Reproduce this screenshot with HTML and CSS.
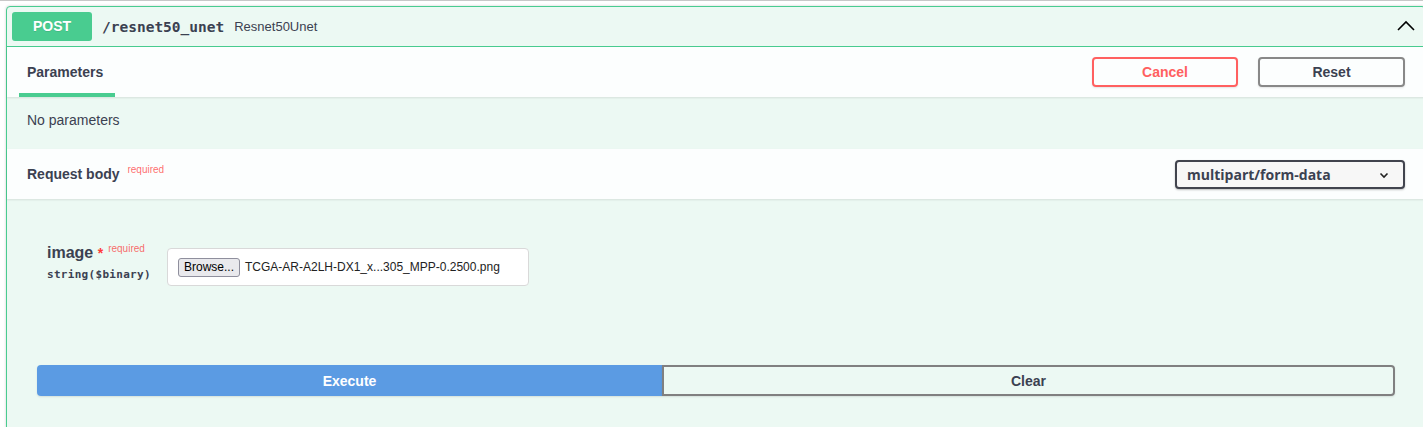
FILE: index.html
```html
<!DOCTYPE html>
<html>
<head>
<meta charset="utf-8">
<link rel="stylesheet" href="styles.css">
</head>
<body>
<div class="top-line"></div>
<div class="opblock">
  <div class="summary">
    <span class="method">POST</span>
    <span class="path">/resnet50_unet</span>
    <span class="desc">Resnet50Unet</span>
    <svg class="chevron" width="20" height="20" viewBox="0 0 20 20"><polyline points="2,14 10,6 18,14" fill="none" stroke="#000" stroke-width="1.6"/></svg>
  </div>
  <div class="section-header">
    <div class="tab"><h4 class="tab-title">Parameters</h4></div>
    <div class="actions">
      <button class="btn cancel">Cancel</button>
      <button class="btn reset">Reset</button>
    </div>
  </div>
  <div class="no-params">No parameters</div>
  <div class="section-header rb-header">
    <h4 class="rb-title">Request body <sup class="req">required</sup></h4>
    <div class="select">
      <span>multipart/form-data</span>
      <svg width="12" height="12" viewBox="0 0 12 12"><polyline points="2.5,4.5 6,8 9.5,4.5" fill="none" stroke="#222" stroke-width="1.6"/></svg>
    </div>
  </div>
  <div class="body">
    <div class="param-row">
      <div class="param-name">
        <div class="pname">image <span class="star">*</span><span class="preq">required</span></div>
        <div class="ptype">string($binary)</div>
      </div>
      <div class="file-input">
        <span class="browse">Browse...</span>
        <span class="fname">TCGA-AR-A2LH-DX1_x...305_MPP-0.2500.png</span>
      </div>
    </div>
    <div class="btn-group">
      <button class="execute">Execute</button>
      <button class="clear">Clear</button>
    </div>
  </div>
</div>
</body>
</html>
```
FILE: styles.css
```css
html, body {
  margin: 0;
  padding: 0;
  background: #fff;
  overflow: hidden;
  width: 1423px;
  height: 427px;
}
body {
  font-family: "Liberation Sans", Arial, sans-serif;
  color: #3b4151;
}
.top-line {
  height: 1px;
  background: #c8c8c8;
}
.opblock {
  margin: 5px 0 0 6px;
  width: 1418px;
  border: 1px solid #49cc90;
  border-radius: 4px;
  background: #ecf9f3;
  box-shadow: 0 0 3px rgba(0,0,0,.19);
  height: 440px;
}
.summary {
  display: flex;
  align-items: center;
  padding: 5px;
  height: 29px;
  border-bottom: 1px solid #49cc90;
}
.method {
  width: 80px;
  height: 29px;
  line-height: 29px;
  text-align: center;
  background: #49cc90;
  color: #fff;
  font-weight: bold;
  font-size: 14px;
  border-radius: 3px;
  text-shadow: 0 1px 0 rgba(0,0,0,.1);
}
.path {
  font-family: "DejaVu Sans Mono", monospace;
  font-weight: bold;
  font-size: 14.5px;
  margin-left: 10px;
}
.desc {
  font-size: 13px;
  margin-left: 10px;
  flex: 1;
}
.chevron {
  margin-right: 4px;
  margin-top: -2px;
}
.section-header {
  display: flex;
  align-items: center;
  justify-content: space-between;
  height: 50px;
  padding: 0 20px;
  background: rgba(255,255,255,.85);
  box-shadow: 0 1px 2px rgba(0,0,0,.1);
}
.tab {
  position: relative;
  height: 50px;
  display: flex;
  align-items: center;
}
.tab-title {
  margin: 0;
  font-size: 14px;
  font-weight: bold;
  position: relative;
}
.tab-title::after {
  content: "";
  position: absolute;
  left: -8px;
  width: 96px;
  height: 4px;
  bottom: -17px;
  background: #49cc90;
}
.actions {
  display: flex;
  gap: 20px;
  margin-top: -1px;
}
.btn {
  height: 30px;
  font-family: "Liberation Sans", Arial, sans-serif;
  font-size: 14px;
  font-weight: bold;
  background: transparent;
  border-radius: 4px;
  border: 2px solid #888;
  color: #3b4151;
  box-shadow: 0 1px 2px rgba(0,0,0,.1);
}
.cancel {
  width: 146px;
  border-color: #ff6060;
  color: #ff6060;
}
.reset {
  width: 147px;
}
.no-params {
  height: 52px;
  line-height: 46px;
  padding: 0 20px;
  font-size: 14px;
}
.rb-header {
  height: 50px;
}
.rb-title {
  margin: 0;
  font-size: 14px;
  font-weight: bold;
}
.req {
  font-size: 10px;
  color: rgba(255,0,0,.6);
  font-weight: normal;
  vertical-align: 0;
  position: relative;
  top: -6px;
  margin-left: 4px;
}
.select {
  box-sizing: border-box;
  width: 230px;
  height: 29px;
  border: 2px solid #41444e;
  border-radius: 4px;
  background: #f7f7f7;
  box-shadow: 0 1px 2px 0 rgba(0,0,0,.25);
  display: flex;
  align-items: center;
  justify-content: space-between;
  padding: 0 13px 0 10px;
  font-family: "Open Sans", sans-serif;
  font-weight: bold;
  font-size: 14px;
  margin-top: 1px;
}
.body {
  padding: 44px 28px 0 30px;
}
.param-row {
  display: flex;
  align-items: flex-start;
  padding-left: 10px;
}
.param-name {
  width: 120px;
  padding-top: 1px;
}
.pname {
  font-size: 16px;
  font-weight: bold;
  line-height: 18px;
}
.star {
  color: #ff3b3b;
  font-size: 14px;
}
.preq {
  font-size: 10px;
  font-weight: normal;
  color: rgba(255,0,0,.6);
  position: relative;
  top: -6px;
  margin-left: 5px;
}
.ptype {
  font-family: "DejaVu Sans Mono", monospace;
  font-size: 11px;
  font-weight: bold;
  color: #3b4151;
  margin-top: 4px;
  letter-spacing: 0.3px;
}
.file-input {
  margin-top: 5px;
  width: 340px;
  height: 36px;
  border: 1px solid #d9d9d9;
  border-radius: 4px;
  background: #fff;
  display: flex;
  align-items: center;
  padding: 0 10px;
  font-size: 12px;
  color: #222;
}
.browse {
  display: inline-block;
  height: 17px;
  line-height: 17px;
  padding: 0 5px;
  border: 1px solid #8f8f9d;
  border-radius: 3px;
  background: #e9e9ed;
  color: #000;
  font-size: 12px;
  margin-right: 5px;
}
.btn-group {
  display: flex;
  margin-top: 79px;
}
.execute {
  width: 625px;
  height: 31px;
  border: none;
  background: #5b9be3;
  color: #fff;
  font-family: "Liberation Sans", Arial, sans-serif;
  font-weight: bold;
  font-size: 14px;
  border-radius: 4px 0 0 4px;
  box-shadow: 0 1px 2px rgba(0,0,0,.1);
}
.clear {
  width: 733px;
  height: 31px;
  border: 2px solid #808080;
  background: transparent;
  color: #3b4151;
  font-family: "Liberation Sans", Arial, sans-serif;
  font-weight: bold;
  font-size: 14px;
  border-radius: 0 4px 4px 0;
  box-shadow: 0 1px 2px rgba(0,0,0,.1);
}
```
